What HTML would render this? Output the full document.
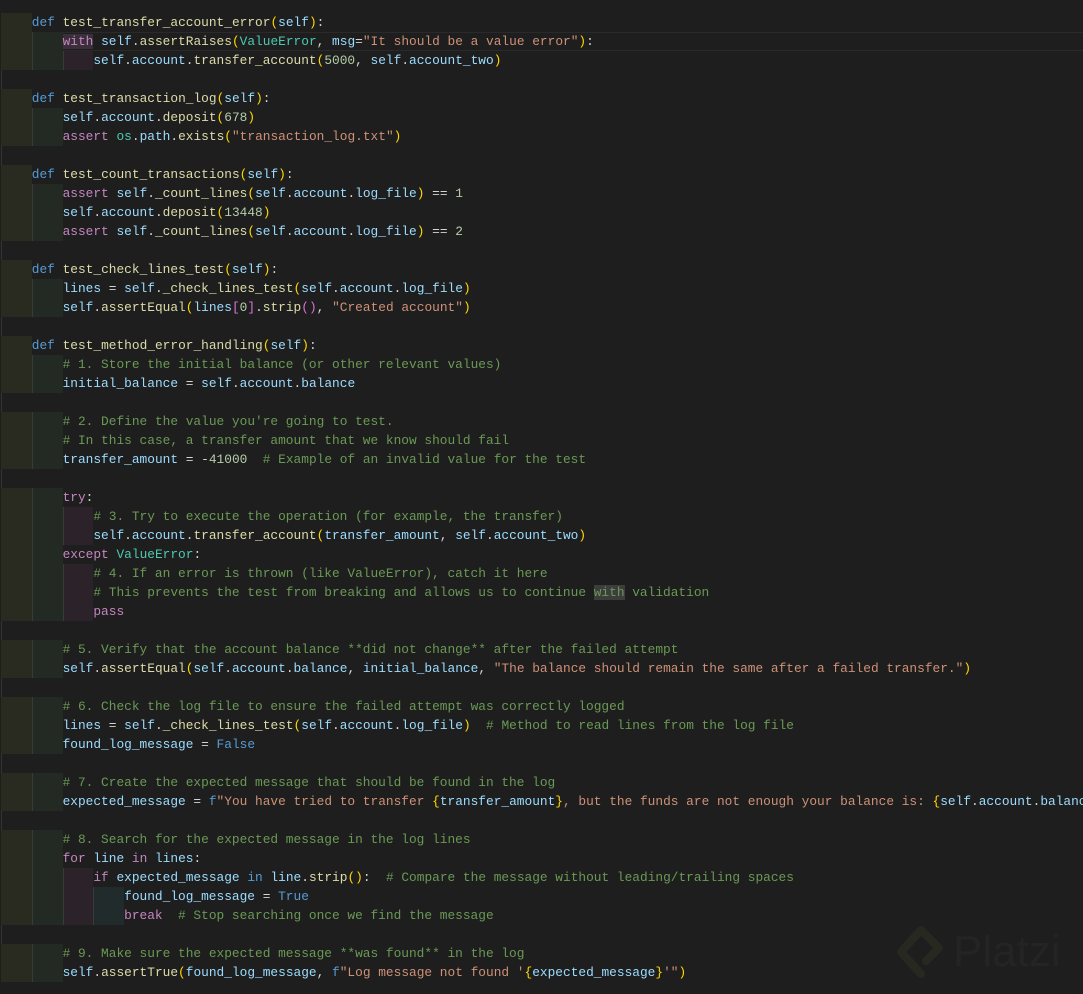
<!DOCTYPE html>
<html><head><meta charset="utf-8"><style>
html,body{margin:0;padding:0;background:#1e1e1e;width:1083px;height:994px;overflow:hidden;position:relative}
#code{position:absolute;left:1px;top:13px;font-family:"Liberation Mono",monospace;font-size:12.83px;color:#d4d4d4}
.l{height:19px;line-height:19px;white-space:pre}
i{display:inline-block;width:4ch;height:19px;vertical-align:top;font-style:normal}
i.a{background:#2a2b20}i.b{background:#232a24;box-shadow:inset 1px 0 #3a3a3a}i.c{background:#2b2329;box-shadow:inset 1px 0 #3a3a3a}i.d{background:#222b2b;box-shadow:inset 1px 0 #3a3a3a}
.k{color:#569cd6}.c{color:#c586c0}.f{color:#dcdcaa}.v{color:#9cdcfe}.s{color:#ce9178}.n{color:#b5cea8}.m{color:#6a9955}.t{color:#4ec9b0}
.y{color:#ffd700}.p{color:#da70d6}.u{color:#179fff}
.hl{background:#3d3d3d}.sel{background:#3a2f3a}
.blank{height:19px;box-shadow:inset 32px 0 0 -31px #333}
#logo{position:absolute;left:893px;top:922px}
#pl{position:absolute;left:953px;top:927px;font-family:"Liberation Sans",sans-serif;font-size:44px;color:#242424}
</style></head><body>
<div id="code"><div class="l"><i class="a"></i><span class="k">def</span> <span class="f">test_transfer_account_error</span><span class="y">(</span><span class="v">self</span><span class="y">)</span>:</div><div class="l" style="box-shadow:inset 0 1px #2a2a2a,inset 0 -1px #2a2a2a"><i class="a"></i><i class="b"></i><span class="c sel">with</span> <span class="v">self</span>.<span class="f">assertRaises</span><span class="y">(</span><span class="t">ValueError</span>, <span class="v">msg</span>=<span class="s">"It should be a value error"</span><span class="y">)</span>:</div><div class="l"><i class="a"></i><i class="b"></i><i class="c"></i><span class="v">self</span>.<span class="v">account</span>.<span class="f">transfer_account</span><span class="y">(</span><span class="n">5000</span>, <span class="v">self</span>.<span class="v">account_two</span><span class="y">)</span></div><div class="blank"></div><div class="l"><i class="a"></i><span class="k">def</span> <span class="f">test_transaction_log</span><span class="y">(</span><span class="v">self</span><span class="y">)</span>:</div><div class="l"><i class="a"></i><i class="b"></i><span class="v">self</span>.<span class="v">account</span>.<span class="f">deposit</span><span class="y">(</span><span class="n">678</span><span class="y">)</span></div><div class="l"><i class="a"></i><i class="b"></i><span class="c">assert</span> <span class="t">os</span>.<span class="v">path</span>.<span class="f">exists</span><span class="y">(</span><span class="s">"transaction_log.txt"</span><span class="y">)</span></div><div class="blank"></div><div class="l"><i class="a"></i><span class="k">def</span> <span class="f">test_count_transactions</span><span class="y">(</span><span class="v">self</span><span class="y">)</span>:</div><div class="l"><i class="a"></i><i class="b"></i><span class="c">assert</span> <span class="v">self</span>.<span class="f">_count_lines</span><span class="y">(</span><span class="v">self</span>.<span class="v">account</span>.<span class="v">log_file</span><span class="y">)</span> == <span class="n">1</span></div><div class="l"><i class="a"></i><i class="b"></i><span class="v">self</span>.<span class="v">account</span>.<span class="f">deposit</span><span class="y">(</span><span class="n">13448</span><span class="y">)</span></div><div class="l"><i class="a"></i><i class="b"></i><span class="c">assert</span> <span class="v">self</span>.<span class="f">_count_lines</span><span class="y">(</span><span class="v">self</span>.<span class="v">account</span>.<span class="v">log_file</span><span class="y">)</span> == <span class="n">2</span></div><div class="blank"></div><div class="l"><i class="a"></i><span class="k">def</span> <span class="f">test_check_lines_test</span><span class="y">(</span><span class="v">self</span><span class="y">)</span>:</div><div class="l"><i class="a"></i><i class="b"></i><span class="v">lines</span> = <span class="v">self</span>.<span class="f">_check_lines_test</span><span class="y">(</span><span class="v">self</span>.<span class="v">account</span>.<span class="v">log_file</span><span class="y">)</span></div><div class="l"><i class="a"></i><i class="b"></i><span class="v">self</span>.<span class="f">assertEqual</span><span class="y">(</span><span class="v">lines</span><span class="p">[</span><span class="n">0</span><span class="p">]</span>.<span class="f">strip</span><span class="p">()</span>, <span class="s">"Created account"</span><span class="y">)</span></div><div class="blank"></div><div class="l"><i class="a"></i><span class="k">def</span> <span class="f">test_method_error_handling</span><span class="y">(</span><span class="v">self</span><span class="y">)</span>:</div><div class="l"><i class="a"></i><i class="b"></i><span class="m"># 1. Store the initial balance (or other relevant values)</span></div><div class="l"><i class="a"></i><i class="b"></i><span class="v">initial_balance</span> = <span class="v">self</span>.<span class="v">account</span>.<span class="v">balance</span></div><div class="blank"></div><div class="l"><i class="a"></i><i class="b"></i><span class="m"># 2. Define the value you're going to test.</span></div><div class="l"><i class="a"></i><i class="b"></i><span class="m"># In this case, a transfer amount that we know should fail</span></div><div class="l"><i class="a"></i><i class="b"></i><span class="v">transfer_amount</span> = -<span class="n">41000</span>  <span class="m"># Example of an invalid value for the test</span></div><div class="blank"></div><div class="l"><i class="a"></i><i class="b"></i><span class="c">try</span>:</div><div class="l"><i class="a"></i><i class="b"></i><i class="c"></i><span class="m"># 3. Try to execute the operation (for example, the transfer)</span></div><div class="l"><i class="a"></i><i class="b"></i><i class="c"></i><span class="v">self</span>.<span class="v">account</span>.<span class="f">transfer_account</span><span class="y">(</span><span class="v">transfer_amount</span>, <span class="v">self</span>.<span class="v">account_two</span><span class="y">)</span></div><div class="l"><i class="a"></i><i class="b"></i><span class="c">except</span> <span class="t">ValueError</span>:</div><div class="l"><i class="a"></i><i class="b"></i><i class="c"></i><span class="m"># 4. If an error is thrown (like ValueError), catch it here</span></div><div class="l"><i class="a"></i><i class="b"></i><i class="c"></i><span class="m"># This prevents the test from breaking and allows us to continue <span class="hl">with</span> validation</span></div><div class="l"><i class="a"></i><i class="b"></i><i class="c"></i><span class="c">pass</span></div><div class="blank"></div><div class="l"><i class="a"></i><i class="b"></i><span class="m"># 5. Verify that the account balance **did not change** after the failed attempt</span></div><div class="l"><i class="a"></i><i class="b"></i><span class="v">self</span>.<span class="f">assertEqual</span><span class="y">(</span><span class="v">self</span>.<span class="v">account</span>.<span class="v">balance</span>, <span class="v">initial_balance</span>, <span class="s">"The balance should remain the same after a failed transfer."</span><span class="y">)</span></div><div class="blank"></div><div class="l"><i class="a"></i><i class="b"></i><span class="m"># 6. Check the log file to ensure the failed attempt was correctly logged</span></div><div class="l"><i class="a"></i><i class="b"></i><span class="v">lines</span> = <span class="v">self</span>.<span class="f">_check_lines_test</span><span class="y">(</span><span class="v">self</span>.<span class="v">account</span>.<span class="v">log_file</span><span class="y">)</span>  <span class="m"># Method to read lines from the log file</span></div><div class="l"><i class="a"></i><i class="b"></i><span class="v">found_log_message</span> = <span class="k">False</span></div><div class="blank"></div><div class="l"><i class="a"></i><i class="b"></i><span class="m"># 7. Create the expected message that should be found in the log</span></div><div class="l"><i class="a"></i><i class="b"></i><span class="v">expected_message</span> = <span class="k">f</span><span class="s">"You have tried to transfer </span><span class="y">{</span><span class="v">transfer_amount</span><span class="y">}</span><span class="s">, but the funds are not enough your balance is: </span><span class="y">{</span><span class="v">self</span>.<span class="v">account</span>.<span class="v">balance</span><span class="y">}</span><span class="s">"</span></div><div class="blank"></div><div class="l"><i class="a"></i><i class="b"></i><span class="m"># 8. Search for the expected message in the log lines</span></div><div class="l"><i class="a"></i><i class="b"></i><span class="c">for</span> <span class="v">line</span> <span class="c">in</span> <span class="v">lines</span>:</div><div class="l"><i class="a"></i><i class="b"></i><i class="c"></i><span class="c">if</span> <span class="v">expected_message</span> <span class="k">in</span> <span class="v">line</span>.<span class="f">strip</span><span class="y">()</span>:  <span class="m"># Compare the message without leading/trailing spaces</span></div><div class="l"><i class="a"></i><i class="b"></i><i class="c"></i><i class="d"></i><span class="v">found_log_message</span> = <span class="k">True</span></div><div class="l"><i class="a"></i><i class="b"></i><i class="c"></i><i class="d"></i><span class="c">break</span>  <span class="m"># Stop searching once we find the message</span></div><div class="blank"></div><div class="l"><i class="a"></i><i class="b"></i><span class="m"># 9. Make sure the expected message **was found** in the log</span></div><div class="l"><i class="a"></i><i class="b"></i><span class="v">self</span>.<span class="f">assertTrue</span><span class="y">(</span><span class="v">found_log_message</span>, <span class="k">f</span><span class="s">"Log message not found '</span><span class="y">{</span><span class="v">expected_message</span><span class="y">}</span><span class="s">'"</span><span class="y">)</span></div></div>
<svg id="logo" width="56" height="64" viewBox="0 0 56 64"><path d="M28 8 L8 30 L28 52 M28 8 L46 26 L33 39" fill="none" stroke="#272920" stroke-width="8" stroke-linejoin="round" stroke-linecap="round"/></svg>
<div id="pl">Platzi</div>
</body></html>
